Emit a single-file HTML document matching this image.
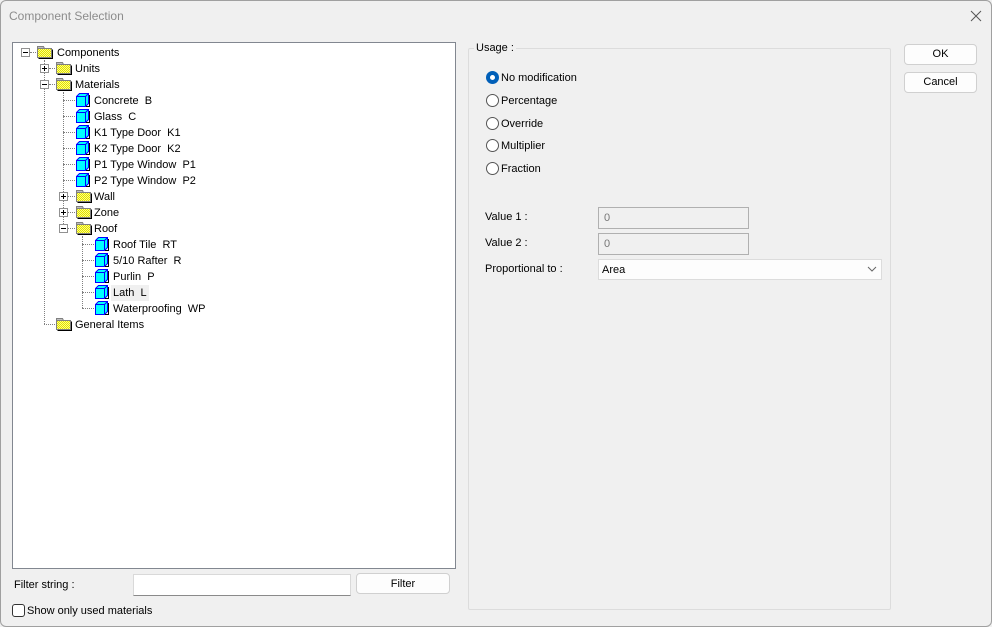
<!DOCTYPE html>
<html><head><meta charset="utf-8"><style>
*{margin:0;padding:0;box-sizing:border-box}
body{width:992px;height:627px;background:#f0f0f0;font-family:"Liberation Sans",sans-serif;font-size:11px;color:#000;position:relative;overflow:hidden}
.a{position:absolute;white-space:nowrap}
.win{position:absolute;left:0;top:0;width:992px;height:627px;border:1px solid #a0a0a0;border-radius:6px}
.tree{position:absolute;left:12px;top:42px;width:444px;height:527px;background:#fff;border:1px solid #828790}
.t{position:absolute;white-space:nowrap;line-height:14px;height:15px;padding:0 2px}
.hl{position:absolute;border-top:1px dotted #808080;height:0}
.vl{position:absolute;border-left:1px dotted #808080;width:0}
.bx{position:absolute;width:9px;height:9px;border:1px solid #919191;background:#fff}
.bx:before{content:"";position:absolute;left:1px;top:3px;width:5px;height:1px;background:#000}
.bx.p:after{content:"";position:absolute;left:3px;top:1px;width:1px;height:5px;background:#000}
.ic{position:absolute}
.btn{position:absolute;background:#fdfdfd;border:1px solid #d0d0d0;border-radius:4px;text-align:center;line-height:19px}
.inp{position:absolute;background:#fff;border:1px solid #d9d9d9;border-bottom-color:#8a8a8a}
.rad{position:absolute;width:13px;height:13px;border:1px solid #555;border-radius:50%;background:#fff}
</style></head><body>
<svg width="0" height="0" style="position:absolute">
<defs>
<pattern id="dp" width="2" height="2" patternUnits="userSpaceOnUse"><rect width="2" height="2" fill="#ffff80"/><rect width="1" height="1" fill="#e0e000"/><rect x="1" y="1" width="1" height="1" fill="#e0e000"/></pattern>
<symbol id="f" viewBox="0 0 17 14"><path d="M1.5 3.5V1.5H7.5L8.5 3.5Z" fill="#c0c0c0" stroke="#808080"/><rect x="1.5" y="3.5" width="14" height="9" fill="url(#dp)" stroke="#808080"/><path d="M2.5 13.5H16.5V4.5" fill="none" stroke="#000"/></symbol>
<symbol id="c" viewBox="0 0 16 16"><path d="M1.5 4.5L4.5 1.5H13.5V11.5L10.5 14.5H1.5Z" fill="#00ffff" stroke="#0000ff"/><path d="M1.5 4.5H10.5V14.5M10.5 4.5L13.5 1.5" fill="none" stroke="#0000ff"/><path d="M14.5 3V14.5H11" fill="none" stroke="#000"/></symbol>
</defs></svg>
<div class="win"></div>
<div class="a" style="left:9px;top:9px;color:#8c8c8c;font-size:12px">Component Selection</div>
<svg class="a" style="left:970px;top:10px" width="12" height="12"><path d="M1 1L11 11M11 1L1 11" stroke="#555" stroke-width="1"/></svg>

<div class="tree"></div>
<div class="vl" style="left:44px;top:60px;height:264px"></div>
<div class="vl" style="left:63px;top:92px;height:136px"></div>
<div class="vl" style="left:82px;top:236px;height:72px"></div>
<div class="hl" style="left:30px;top:52px;width:6px"></div>
<div class="hl" style="left:49px;top:68px;width:6px"></div>
<div class="hl" style="left:49px;top:84px;width:6px"></div>
<div class="hl" style="left:44px;top:324px;width:11px"></div>
<div class="hl" style="left:63px;top:100px;width:12px"></div>
<div class="hl" style="left:63px;top:116px;width:12px"></div>
<div class="hl" style="left:63px;top:132px;width:12px"></div>
<div class="hl" style="left:63px;top:148px;width:12px"></div>
<div class="hl" style="left:63px;top:164px;width:12px"></div>
<div class="hl" style="left:63px;top:180px;width:12px"></div>
<div class="hl" style="left:68px;top:196px;width:7px"></div>
<div class="hl" style="left:68px;top:212px;width:7px"></div>
<div class="hl" style="left:68px;top:228px;width:7px"></div>
<div class="hl" style="left:82px;top:244px;width:12px"></div>
<div class="hl" style="left:82px;top:260px;width:12px"></div>
<div class="hl" style="left:82px;top:276px;width:12px"></div>
<div class="hl" style="left:82px;top:292px;width:12px"></div>
<div class="hl" style="left:82px;top:308px;width:12px"></div>
<div class="bx" style="left:21px;top:48px"></div>
<div class="bx p" style="left:40px;top:64px"></div>
<div class="bx" style="left:40px;top:80px"></div>
<div class="bx p" style="left:59px;top:192px"></div>
<div class="bx p" style="left:59px;top:208px"></div>
<div class="bx" style="left:59px;top:224px"></div>
<svg class="ic" style="left:36px;top:45px" width="17" height="14"><use href="#f"/></svg>
<svg class="ic" style="left:55px;top:61px" width="17" height="14"><use href="#f"/></svg>
<svg class="ic" style="left:55px;top:77px" width="17" height="14"><use href="#f"/></svg>
<svg class="ic" style="left:75px;top:92px" width="16" height="16"><use href="#c"/></svg>
<svg class="ic" style="left:75px;top:108px" width="16" height="16"><use href="#c"/></svg>
<svg class="ic" style="left:75px;top:124px" width="16" height="16"><use href="#c"/></svg>
<svg class="ic" style="left:75px;top:140px" width="16" height="16"><use href="#c"/></svg>
<svg class="ic" style="left:75px;top:156px" width="16" height="16"><use href="#c"/></svg>
<svg class="ic" style="left:75px;top:172px" width="16" height="16"><use href="#c"/></svg>
<svg class="ic" style="left:75px;top:189px" width="17" height="14"><use href="#f"/></svg>
<svg class="ic" style="left:75px;top:205px" width="17" height="14"><use href="#f"/></svg>
<svg class="ic" style="left:75px;top:221px" width="17" height="14"><use href="#f"/></svg>
<svg class="ic" style="left:94px;top:236px" width="16" height="16"><use href="#c"/></svg>
<svg class="ic" style="left:94px;top:252px" width="16" height="16"><use href="#c"/></svg>
<svg class="ic" style="left:94px;top:268px" width="16" height="16"><use href="#c"/></svg>
<svg class="ic" style="left:94px;top:284px" width="16" height="16"><use href="#c"/></svg>
<svg class="ic" style="left:94px;top:300px" width="16" height="16"><use href="#c"/></svg>
<svg class="ic" style="left:55px;top:317px" width="17" height="14"><use href="#f"/></svg>
<div class="t" style="left:55px;top:46px">Components</div>
<div class="t" style="left:73px;top:62px">Units</div>
<div class="t" style="left:73px;top:78px">Materials</div>
<div class="t" style="left:92px;top:94px">Concrete&nbsp; B</div>
<div class="t" style="left:92px;top:110px">Glass&nbsp; C</div>
<div class="t" style="left:92px;top:126px">K1 Type Door&nbsp; K1</div>
<div class="t" style="left:92px;top:142px">K2 Type Door&nbsp; K2</div>
<div class="t" style="left:92px;top:158px">P1 Type Window&nbsp; P1</div>
<div class="t" style="left:92px;top:174px">P2 Type Window&nbsp; P2</div>
<div class="t" style="left:92px;top:190px">Wall</div>
<div class="t" style="left:92px;top:206px">Zone</div>
<div class="t" style="left:92px;top:222px">Roof</div>
<div class="t" style="left:111px;top:238px">Roof Tile&nbsp; RT</div>
<div class="t" style="left:111px;top:254px">5/10 Rafter&nbsp; R</div>
<div class="t" style="left:111px;top:270px">Purlin&nbsp; P</div>
<div class="t" style="left:111px;top:285px;background:#f0f0f0;padding-top:1px;height:16px">Lath&nbsp; L</div>
<div class="t" style="left:111px;top:302px">Waterproofing&nbsp; WP</div>
<div class="t" style="left:73px;top:318px">General Items</div>

<div class="a" style="left:14px;top:579px">Filter string :</div>
<div class="inp" style="left:133px;top:574px;width:218px;height:22px"></div>
<div class="btn" style="left:356px;top:573px;width:94px;height:21px;line-height:20px">Filter</div>
<div class="a" style="left:12px;top:604px;width:13px;height:13px;border:1px solid #333;border-radius:3px;background:#fff"></div>
<div class="a" style="left:27px;top:605px">Show only used materials</div>

<div class="a" style="left:468px;top:48px;width:423px;height:562px;border:1px solid #dcdcdc;border-radius:2px"></div>
<div class="a" style="left:474px;top:42px;background:#f0f0f0;padding:0 2px">Usage :</div>
<div class="rad" style="left:486px;top:71px;border:4px solid #005fb8"></div>
<div class="a" style="left:501px;top:72px">No modification</div>
<div class="rad" style="left:486px;top:94px"></div>
<div class="a" style="left:501px;top:95px">Percentage</div>
<div class="rad" style="left:486px;top:117px"></div>
<div class="a" style="left:501px;top:118px">Override</div>
<div class="rad" style="left:486px;top:139px"></div>
<div class="a" style="left:501px;top:140px">Multiplier</div>
<div class="rad" style="left:486px;top:162px"></div>
<div class="a" style="left:501px;top:163px">Fraction</div>

<div class="a" style="left:485px;top:211px">Value 1 :</div>
<div class="a" style="left:598px;top:207px;width:151px;height:22px;border:1px solid #b0b0b0;background:#f0f0f0;color:#777;padding:4px 0 0 5px">0</div>
<div class="a" style="left:485px;top:237px">Value 2 :</div>
<div class="a" style="left:598px;top:233px;width:151px;height:22px;border:1px solid #b0b0b0;background:#f0f0f0;color:#777;padding:4px 0 0 5px">0</div>
<div class="a" style="left:485px;top:263px">Proportional to :</div>
<div class="a" style="left:598px;top:259px;width:284px;height:21px;border:1px solid #dcdcdc;background:#fdfdfd;padding:4px 0 0 3px">Area</div>
<svg class="a" style="left:867px;top:266px" width="10" height="6"><path d="M1 1L5 5L9 1" fill="none" stroke="#666"/></svg>

<div class="btn" style="left:904px;top:44px;width:73px;height:21px">OK</div>
<div class="btn" style="left:904px;top:72px;width:73px;height:21px">Cancel</div>
</body></html>
